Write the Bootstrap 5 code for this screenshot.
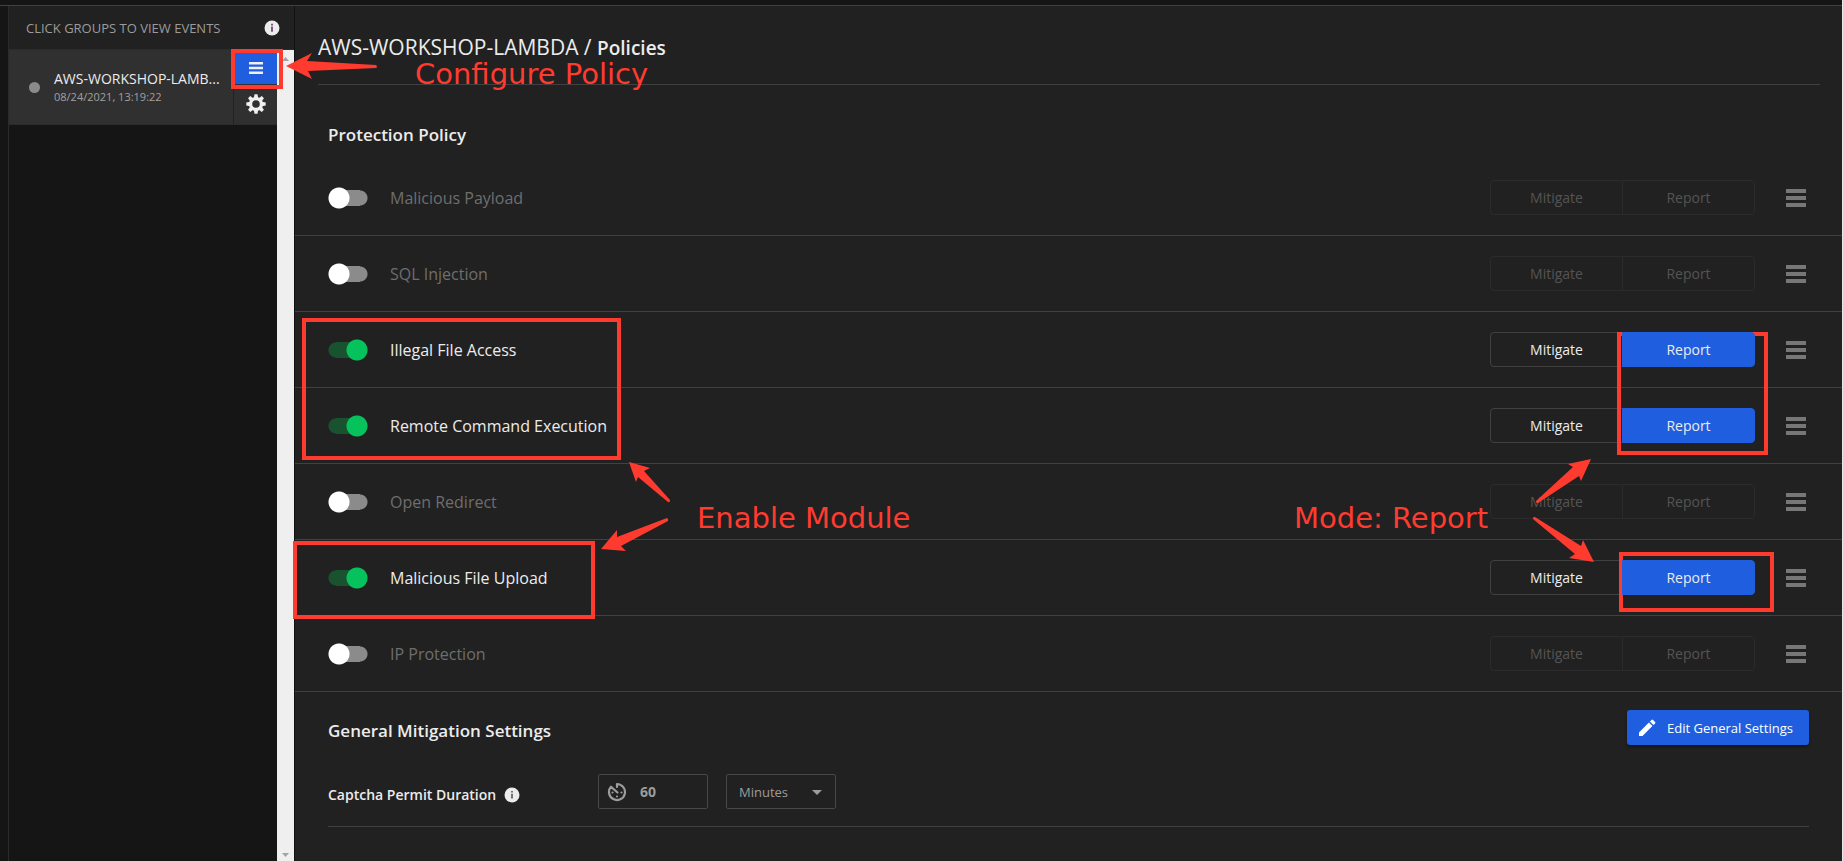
<!DOCTYPE html>
<html lang="en">
<head>
<meta charset="utf-8">
<meta name="viewport" content="width=device-width, initial-scale=1">
<title>Policies</title>
<link rel="stylesheet" href="https://cdn.jsdelivr.net/npm/bootstrap@5.3.0/dist/css/bootstrap.min.css">
<style>
  body { background: #151515; color: #ececec; font-family: "Open Sans", "Noto Sans", sans-serif; font-size: 16px; line-height: 24px; }
  svg { display: block; flex: none; }
  .shell { min-height: 100vh; border-right: 1px solid #e8e8e8; padding-top: 5px; }
  .shell-body { border-top: 1px solid #414141; }
  .groups { width: 287px; flex: none; margin-left: 8px; border-left: 1px solid #2b2b2b; border-right: 1px solid #111; }
  .groups-head { height: 44px; background: #212121; color: #9c9c9c; font-size: 13px; padding: 0 14px 0 17px; border-bottom: 1px solid #2b2b2b; }
  .group-item { height: 75px; background: #303030; border-bottom: 1px solid #2b2b2b; }
  .group-label { margin-left: 14px; }
  .group-name { font-size: 14px; line-height: 20px; }
  .group-date { font-size: 11px; line-height: 16px; color: #a0a0a0; }
  .dot { width: 11px; height: 11px; background: #8b8b8b; flex: none; }
  .group-tools { width: 44px; border-left: 1px solid #212121; flex: none; padding-top: 2px; }
  .tool { border: 0; border-radius: 0; color: #f0f0f0; }
  .tool.on { background: #1f5fdf; }
  .track { width: 17px; background: #efefef; color: #a3a3a3; padding: 7px 5px 4px; }
  .policy { background: #212121; min-width: 0; }
  .page-title { margin: 0 22px 0 23px; height: 79px; padding-top: 27px; border-bottom: 1px solid #414141; font-size: 21px; line-height: 28px; font-weight: 400; }
  .page-title strong { font-size: 19px; font-weight: 600; }
  .section-title { font-size: 17px; line-height: 24px; font-weight: 600; }
  .protection-title { padding: 38px 33px 13px; }
  .general-head { padding: 18px 33px 0; }
  .general-head .section-title { padding-top: 9px; }
  .rule { height: 76px; border-bottom: 1px solid #414141; padding: 0 36px 0 33px; }
  .rule label { color: #6e6e6e; margin-left: 22px; }
  .rule.on label { color: #ececec; }
  .switch { appearance: none; width: 40px; height: 22px; margin: 0; flex: none; background:
    radial-gradient(circle at 11px 11px, #fff 10px, transparent 11px),
    linear-gradient(#8b8b8b, #8b8b8b) center / 24px 16px no-repeat,
    radial-gradient(circle at 32px 11px, #8b8b8b 7px, transparent 8px); }
  .switch:checked { background:
    radial-gradient(circle at 29px 11px, #06c25c 10px, transparent 11px),
    linear-gradient(#19522f, #19522f) center / 24px 16px no-repeat,
    radial-gradient(circle at 8px 11px, #19522f 7px, transparent 8px); }
  .mode { --bs-btn-color: #ececec; --bs-btn-border-color: #414141; --bs-btn-active-bg: #1f5fdf; --bs-btn-active-border-color: #1f5fdf;
    --bs-btn-disabled-color: #545454; --bs-btn-disabled-border-color: #2b2b2b; --bs-btn-disabled-opacity: 1; --bs-btn-border-radius: 4px;
    width: 133px; height: 35px; font-size: 14px; line-height: 20px; padding: 6px 0; }
  .more { border: 0; color: #777; margin-left: 31px; }
  .edit { background: #1f5fdf; color: #fff; font-size: 13px; line-height: 20px; height: 35px; width: 182px; padding: 0 0 0 8px; border: 0; border-radius: 3px; box-shadow: 0 2px 3px #0006; }
  .setting { margin: 29px 33px 0; padding-bottom: 17px; border-bottom: 1px solid #414141; }
  .setting-name { width: 270px; font-size: 14px; font-weight: 600; padding-top: 6px; }
  .field { width: 110px; height: 35px; border: 1px solid #484848; border-radius: 2px; color: #9c9c9c; }
  .field + .field { margin-left: 18px; }
  .field input, .field select { background: transparent; border: 0; color: inherit; min-width: 0; outline: 0; appearance: none; }
  .field input { font-size: 14px; font-weight: 700; width: 50px; padding: 0; margin-left: 13px; }
  .field select { font-size: 13px; width: 100%; height: 100%; padding: 0 0 0 12px; }
  .field .caret { right: 13px; top: 15px; pointer-events: none; }
  .notes { top: 0; pointer-events: none; fill: #ff3b30; font-family: "DejaVu Sans", sans-serif; font-size: 29px; }
  .notes rect { fill: none; stroke: #ff3b30; stroke-width: 4; }
</style>
<script src="https://cdn.jsdelivr.net/npm/bootstrap@5.3.0/dist/js/bootstrap.bundle.min.js"></script>
</head>
<body>
<div class="shell d-flex flex-column position-relative overflow-hidden">
  <div class="shell-body d-flex flex-grow-1">
    <aside class="groups d-flex flex-column">
      <div class="groups-head d-flex align-items-center justify-content-between">
        <span>CLICK GROUPS TO VIEW EVENTS</span>
        <svg width="16" height="16" viewBox="0 0 16 16" aria-hidden="true"><circle cx="8" cy="8" r="7.5" fill="#ececec"/><path d="M7.2 3.8h1.6v1.6H7.2zM7.2 6.6h1.6v5.2H7.2z" fill="#65305f"/></svg>
      </div>
      <div class="d-flex flex-grow-1">
        <div class="flex-grow-1 overflow-hidden">
          <div class="group-item d-flex">
            <div class="d-flex align-items-center flex-grow-1 overflow-hidden ps-3">
              <span class="dot rounded-circle ms-1"></span>
              <div class="group-label text-nowrap">
                <div class="group-name">AWS-WORKSHOP-LAMB...</div>
                <div class="group-date">08/24/2021, 13:19:22</div>
              </div>
            </div>
            <div class="group-tools d-flex flex-column">
              <button class="tool on btn p-0 flex-fill d-flex align-items-center justify-content-center" aria-label="Configure policy">
                <svg width="14" height="12" viewBox="0 0 14 12" fill="currentColor"><path d="M0 0h14v2.500H0zM0 4.750h14v2.500H0zM0 9.500h14v2.500H0z"/></svg>
              </button>
              <button class="tool btn p-0 flex-fill d-flex align-items-center justify-content-center" aria-label="Group settings">
                <svg width="20" height="20" viewBox="-10 -10 20 20"><g fill="currentColor"><path id="tooth" d="M-2.2-6 -1.5-9.7h3L2.2-6z"/><use href="#tooth" transform="rotate(45)"/><use href="#tooth" transform="rotate(90)"/><use href="#tooth" transform="rotate(135)"/><use href="#tooth" transform="rotate(180)"/><use href="#tooth" transform="rotate(225)"/><use href="#tooth" transform="rotate(270)"/><use href="#tooth" transform="rotate(315)"/></g><circle r="5.4" fill="none" stroke="currentColor" stroke-width="3.2"/></svg>
              </button>
            </div>
          </div>
        </div>
        <div class="track d-flex flex-column justify-content-between" aria-hidden="true">
          <svg width="7" height="4" viewBox="0 0 7 4" fill="currentColor"><path d="M0 4 3.5 0 7 4z"/></svg>
          <svg width="7" height="4" viewBox="0 0 7 4" fill="currentColor"><path d="M0 0 3.5 4 7 0z"/></svg>
        </div>
      </div>
    </aside>

    <main class="policy flex-grow-1">
      <h1 class="page-title">AWS-WORKSHOP-LAMBDA / <strong>Policies</strong></h1>
      <h2 class="section-title protection-title mb-0">Protection Policy</h2>
      <div id="rules"></div>

      <div class="general-head d-flex justify-content-between">
        <h2 class="section-title mb-0">General Mitigation Settings</h2>
        <button class="edit btn d-flex align-items-center gap-2">
          <svg width="24" height="24" viewBox="0 0 24 24" fill="currentColor"><path d="M4 16.500V20h3.500L17.400 10.100l-3.500-3.500zM20.100 7.400a1 1 0 0 0 0-1.400L18 3.900a1 1 0 0 0-1.400 0L14.900 5.600l3.500 3.500z"/></svg>
          <span>Edit General Settings</span>
        </button>
      </div>
      <div class="setting d-flex align-items-center">
        <div class="setting-name d-flex align-items-center">
          <label for="duration">Captcha Permit Duration</label>
          <svg class="ms-2 me-1" width="16" height="16" viewBox="0 0 16 16" aria-hidden="true"><circle cx="8" cy="8" r="7.500" fill="#ececec"/><path d="M7.200 4h1.600v1.600H7.200zM7.200 6.800h1.600v4.800H7.200z" fill="#555"/></svg>
        </div>
        <div class="field d-flex align-items-center ps-2">
          <svg width="20" height="20" viewBox="0 0 20 20"><path d="M10 5V2a8 8 0 1 1-6 2.700L10.500 10.500" fill="none" stroke="currentColor" stroke-width="2.200" stroke-linejoin="round" stroke-linecap="round"/><g fill="currentColor"><circle cx="5.500" cy="10.500" r="1.100"/><circle cx="14.500" cy="10.500" r="1.100"/><circle cx="10" cy="14.500" r="1.100"/></g></svg>
          <input id="duration" type="text" value="60">
        </div>
        <div class="field position-relative">
          <select aria-label="Duration unit"><option>Minutes</option></select>
          <svg class="caret position-absolute" width="10" height="5" viewBox="0 0 10 5" fill="currentColor"><path d="M0 0h10L5 5z"/></svg>
        </div>
      </div>
    </main>
  </div>

  <!-- Walkthrough callouts laid over the console -->
  <svg class="notes position-absolute start-0" width="1000" height="861" viewBox="0 0 1000 861">
    <rect x="233" y="51" width="48" height="36"/>
    <rect x="304" y="320" width="315" height="138"/>
    <rect x="295" y="543" width="298" height="74"/>
    <path d="M286 66 312 53 307 61 376 65Q378 67 376 68L308 71 312 79z"/>
    <path d="M629 462 650 468 644 471 670 500Q670 503 668 502L638 477 636 482z"/>
    <path d="M601 549 617 530 617 537 667 518Q669 519 668 521L621 546 626 551z"/>
    <text x="415" y="84">Configure Policy</text>
    <text x="697" y="528">Enable Module</text>
  </svg>
  <svg class="notes position-absolute end-0" width="562" height="861" viewBox="1280 0 562 861">
    <rect x="1619" y="334" width="147" height="119"/>
    <rect x="1621" y="554" width="151" height="56"/>
    <path d="M1591 459 1568 464 1573 467 1536 501Q1536 504 1538 503L1579 476 1581 481z"/>
    <path d="M1594 562 1583 540 1581 546 1535 517Q1532 517 1533 519L1575 554 1569 558z"/>
    <text x="1294" y="528">Mode: Report</text>
  </svg>
</div>
<script>
  const rules = [
    ['Malicious Payload', false], ['SQL Injection', false], ['Illegal File Access', true],
    ['Remote Command Execution', true], ['Open Redirect', false], ['Malicious File Upload', true], ['IP Protection', false]
  ];
  document.getElementById('rules').innerHTML = rules.map(([name, on], i) => `
    <div class="rule d-flex align-items-center ${on ? 'on' : ''}">
      <input class="switch" type="checkbox" role="switch" id="rule${i}" ${on ? 'checked' : ''}>
      <label for="rule${i}">${name}</label>
      <div class="btn-group ms-auto" role="group" aria-label="${name} mode">
        <button class="mode btn" ${on ? '' : 'disabled'}>Mitigate</button>
        <button class="mode btn ${on ? 'active' : ''}" ${on ? '' : 'disabled'}>Report</button>
      </div>
      <button class="more btn p-0" aria-label="${name} details">
        <svg width="20" height="18" viewBox="0 0 20 18" fill="currentColor"><path d="M0 0h20v4H0zM0 7h20v4H0zM0 14h20v4H0z"/></svg>
      </button>
    </div>`).join('');
</script>
</body>
</html>
